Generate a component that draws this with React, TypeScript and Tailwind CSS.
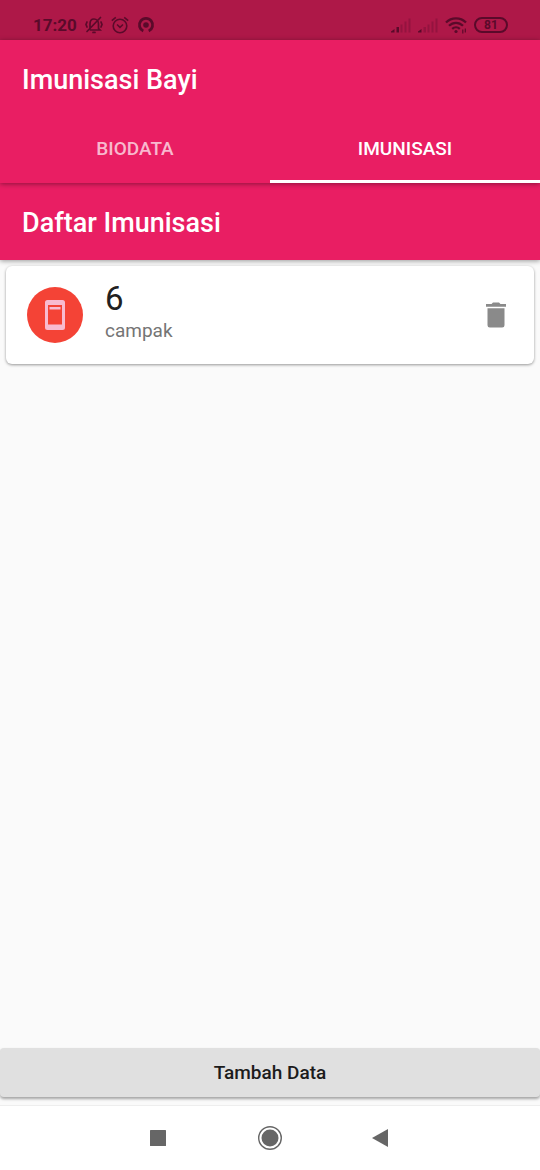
import React from 'react';

function StatusBar() {
  return (
    <div className="flex h-10 shrink-0 items-end justify-between bg-[#ae1848] pr-8 pb-[3px] pl-[33px] text-[#5a0a2a]">
      <div className="flex h-6 items-center gap-2">
        <span className="text-[17px] leading-6 font-bold">17:20</span>
        <svg className="h-[18px] w-[18px]" viewBox="0 0 18 18" fill="none" stroke="currentColor" strokeWidth="1.7" strokeLinecap="round" aria-label="Muted">
          <path d="M5 12.500V8C5 5 6.500 3 9 3s4.500 2 4.500 5v4.500l1.500 1.500H5.500M8 16.400h2M15.500 1.500 2 15.500M2 6 1 8.500 2 11M16 6l1 2.500-1 2.500" />
        </svg>
        <svg className="h-[18px] w-[18px]" viewBox="0 0 18 18" fill="none" stroke="currentColor" strokeWidth="1.6" aria-label="Alarm">
          <circle cx="9" cy="10" r="6.800" />
          <path d="m6 8.500 3 2.800 3-2.800M.8 4.700 4.800 1.300M17.200 4.700 13.200 1.300" />
        </svg>
        <svg className="h-[18px] w-[18px]" viewBox="0 0 18 18" fill="none" stroke="currentColor" aria-label="Hotspot">
          <path d="M6.300 15A6.600 6.600 0 1 1 11.700 15" strokeWidth="2.800" />
          <circle cx="9" cy="9" r="2.800" fill="currentColor" stroke="none" />
        </svg>
      </div>
      <div className="flex h-6 items-center gap-[7px]">
        <Signal strong />
        <Signal />
        <svg className="h-[18px] w-[22px]" viewBox="0 0 22 18" fill="none" stroke="currentColor" strokeWidth="2.3" aria-label="Wi-Fi">
          <path d="M1 6.500C6.500 1 15.500 1 21 6.500M4 9.800c4-4 10-4 14 0M7.200 12.800c2.200-2 5.400-2 7.600 0" />
          <circle cx="11" cy="15.500" r="1.600" fill="currentColor" stroke="none" />
          <path d="M17.800 13.500v4M20.300 12.500v4" strokeWidth="1.200" />
        </svg>
        <span className="flex h-4 w-[34px] items-center justify-center rounded-full border-2 border-current text-[12px] leading-3 font-bold">81</span>
      </div>
    </div>
  );
}

function Signal({ strong = false }: { strong?: boolean }) {
  return (
    <svg className="h-4 w-5" viewBox="0 0 20 16" fill="currentColor" aria-label="Signal">
      <path d="M0 14.500 3.500 12v3.500H0z" />
      <path d="M5.500 10H8v5.500H5.500z" opacity={strong ? 1 : 0.3} />
      <path d="M9.500 7.500h2v8h-2zM13.500 4.500h2v11h-2zM17.500 1.500h2v14h-2z" opacity="0.300" />
    </svg>
  );
}

export default function App() {
  return (
    <div className="flex min-h-screen flex-col bg-[#fafafa] font-['Roboto',sans-serif]">
      <StatusBar />
      <header className="relative z-10 bg-[#e91e63] text-white shadow-[0_1px_5px_rgba(0,0,0,0.4)]">
        <h1 className="px-[22px] pt-[22px] pb-5 text-[27px] leading-9 font-medium">Imunisasi Bayi</h1>
        <div role="tablist" className="grid h-[65px] grid-cols-2 text-[19px] leading-6 font-medium">
          <button role="tab" aria-selected="false" className="border-b-[3px] border-transparent text-white/70">BIODATA</button>
          <button role="tab" aria-selected="true" className="border-b-[3px] border-white">IMUNISASI</button>
        </div>
      </header>
      <div className="bg-[#e91e63] px-[22px] pt-[22px] pb-[19px] text-white shadow-[0_1px_5px_rgba(0,0,0,0.4)]">
        <h2 className="text-[27px] leading-9 font-medium">Daftar Imunisasi</h2>
      </div>
      <main className="flex-1 px-1.5 pt-1.5">
        <article className="flex h-[98px] items-center rounded-md bg-white px-[21px] shadow-[0_1px_3px_rgba(0,0,0,0.4)]">
          <span className="flex size-[56px] items-center justify-center rounded-full bg-[#f44336]">
            <svg className="h-8 w-5" viewBox="0 0 20 32" aria-hidden="true">
              <path fill="#f8bbd0" fillRule="evenodd" d="M2.500 1h15Q20 1 20 3.500v25Q20 31 17.500 31h-15Q0 31 0 28.500v-25Q0 1 2.500 1ZM3 6v19.500h14V6Z" />
              <path fill="#f8bbd0" d="M4.500 8h11v2.500h-11z" />
            </svg>
          </span>
          <div className="ml-[22px] flex-1 pb-2">
            <p className="text-[33px] leading-10 text-[#212121]">6</p>
            <p className="text-[19px] leading-6 text-[#757575]">campak</p>
          </div>
          <button aria-label="Hapus" className="px-[7px] text-[#8a8a8a]">
            <svg className="h-[26px] w-5" viewBox="0 0 20 26" fill="currentColor">
              <path d="M0 2h5.500L7 .500h6L14.500 2H20v2.800H0zM1.500 6.200h17v17q0 2.300-2.300 2.300H3.800q-2.300 0-2.300-2.300z" />
            </svg>
          </button>
        </article>
      </main>
      <div className="border-b border-[#eeeeee] pb-2">
        <button className="block h-[49px] w-full rounded-sm bg-[#e0e0e0] text-[19px] leading-6 font-medium text-[#1c1c1c] shadow-[0_2px_3px_rgba(0,0,0,0.35)]">Tambah Data</button>
      </div>
      <nav className="flex h-16 items-center justify-center gap-[88px] bg-white text-[#666666]">
        <button aria-label="Recent apps">
          <svg className="size-6" viewBox="0 0 24 24" fill="currentColor"><rect x="4" y="4" width="16" height="16" rx="0.500" /></svg>
        </button>
        <button aria-label="Home">
          <svg className="size-6" viewBox="0 0 24 24" fill="currentColor">
            <circle cx="12" cy="12" r="11.300" fill="none" stroke="currentColor" strokeWidth="1.400" />
            <circle cx="12" cy="12" r="8.500" />
          </svg>
        </button>
        <button aria-label="Back">
          <svg className="size-6" viewBox="0 0 24 24" fill="currentColor"><path d="M18 3v18L2 12z" /></svg>
        </button>
      </nav>
    </div>
  );
}
